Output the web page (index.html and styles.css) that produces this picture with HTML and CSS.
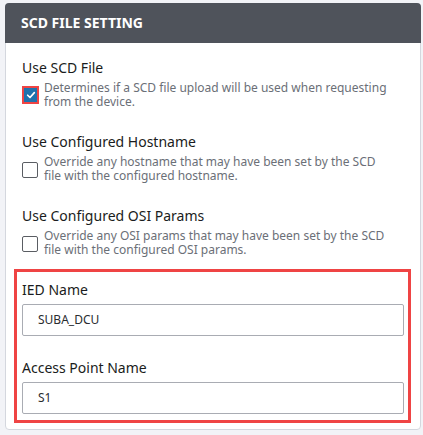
FILE: index.html
```html
<!DOCTYPE html>
<html>
<head>
<meta charset="utf-8">
<link rel="stylesheet" href="styles.css">
</head>
<body>
<div class="card">
  <div class="card-header">SCD FILE SETTING</div>
  <div class="card-body">
    <div class="group">
      <div class="label">Use SCD File</div>
      <div class="check-row">
        <span class="cb checked">
          <svg viewBox="0 0 12 12" width="10" height="10"><path d="M2 6.3 L4.8 9 L10 3.2" fill="none" stroke="#fff" stroke-width="2" stroke-linecap="round" stroke-linejoin="round"/></svg>
        </span>
        <div class="desc">Determines if a SCD file upload will be used when requesting from the device.</div>
      </div>
    </div>
    <div class="group">
      <div class="label">Use Configured Hostname</div>
      <div class="check-row">
        <span class="cb"></span>
        <div class="desc">Override any hostname that may have been set by the SCD file with the configured hostname.</div>
      </div>
    </div>
    <div class="group last">
      <div class="label">Use Configured OSI Params</div>
      <div class="check-row">
        <span class="cb"></span>
        <div class="desc">Override any OSI params that may have been set by the SCD file with the configured OSI params.</div>
      </div>
    </div>
    <div class="highlight">
      <div class="field">
        <div class="label">IED Name</div>
        <div class="input">SUBA_DCU</div>
      </div>
      <div class="field">
        <div class="label">Access Point Name</div>
        <div class="input">S1</div>
      </div>
    </div>
  </div>
</div>
</body>
</html>
```
FILE: styles.css
```css
html, body {
  margin: 0;
  padding: 0;
  background: #f2f3f7;
}
body {
  padding: 3px 2px 0 5px;
  font-family: "Noto Sans", "Open Sans", sans-serif;
}
.card {
  width: 414px;
  background: #fff;
  border: 1px solid #d4d7de;
  border-radius: 4px;
}
.card-header {
  margin: -1px -1px 0 -1px;
  height: 40px;
  box-sizing: border-box;
  background: #4f535b;
  border-radius: 4px 4px 0 0;
  color: #fff;
  font-weight: 700;
  font-size: 14px;
  line-height: 40px;
  padding-left: 16px;
}
.card-body {
  padding: 15px 16px 6px 16px;
}
.group {
  margin-bottom: 23px;
}
.group.last {
  margin-bottom: 12px;
}
.label {
  font-size: 14px;
  font-weight: 400;
  line-height: 20px;
  color: #1a1c20;
}
.check-row {
  display: flex;
  align-items: center;
  margin-top: 3px;
}
.cb {
  flex: none;
  width: 16px;
  height: 16px;
  box-sizing: border-box;
  border: 1.3px solid #5a5d63;
  border-radius: 2px;
  margin-right: 6px;
  margin-top: 2px;
  display: flex;
  align-items: center;
  justify-content: center;
}
.cb.checked {
  width: 17px;
  height: 18px;
  border: 2px solid #ef4444;
  border-radius: 0;
  background: #1f72ad;
  margin-right: 5px;
  margin-top: 0;
}
.desc {
  font-size: 12px;
  line-height: 14px;
  color: #6b6f77;
  max-width: 350px;
}
.highlight {
  border: 3px solid #ef4444;
  margin: 0 -7px 0 -8px;
  padding: 8px 4px 6px 5px;
}
.field + .field {
  margin-top: 22px;
}
.field .label {
  margin-bottom: 4px;
}
.input {
  height: 32px;
  box-sizing: border-box;
  border: 1px solid #a9acb3;
  border-radius: 2px;
  padding: 0 15px;
  font-size: 12px;
  line-height: 30px;
  color: #2a2c30;
}
```
